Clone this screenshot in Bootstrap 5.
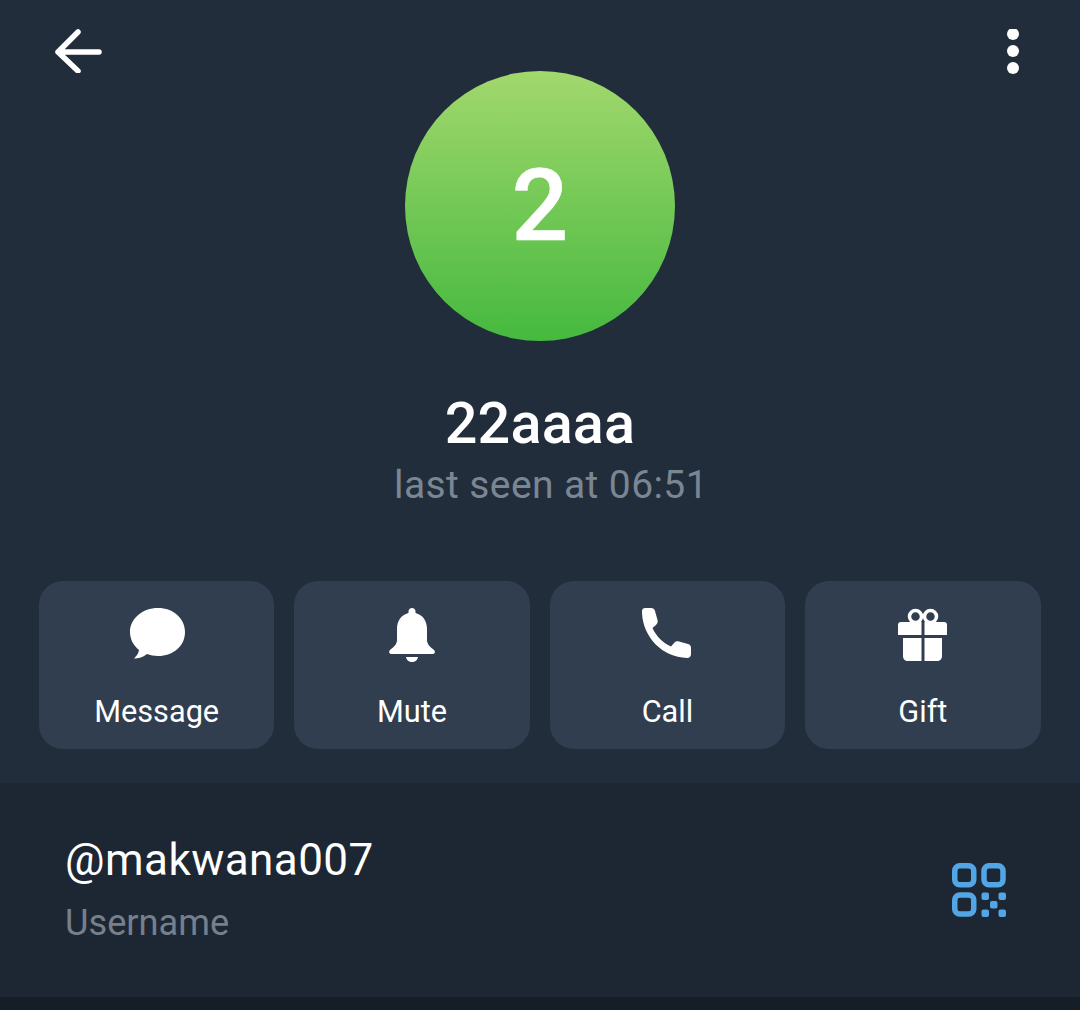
<!DOCTYPE html>
<html lang="en">
<head>
<meta charset="utf-8">
<title>Profile</title>
<link href="https://cdn.jsdelivr.net/npm/bootstrap@5.3.0/dist/css/bootstrap.min.css" rel="stylesheet">
<style>
html,body{height:100%}
body{background:#151e27;font-family:Roboto,"Liberation Sans",sans-serif;color:#fff;overflow:hidden}
.shell{height:783px;background:#212d3b}
.topbar{height:71px;padding:29px 59px 0 54px}
.topbar svg{display:block}
.avatar-disc{width:270px;height:270px;background:linear-gradient(180deg,#a2d86d 0%,#45b93f 100%);font-size:100px;font-weight:500;line-height:1;-webkit-text-stroke:.5px #fff}
.who{margin-top:49px;line-height:1}
.who-name{font-size:57.500px;font-weight:500;line-height:68px;letter-spacing:.2px}
.who-seen{font-size:39px;line-height:54px;color:#7b8693;letter-spacing:.4px;padding-left:22px}
.actions{margin-top:69px;padding:0 39.500px 0 39px;gap:20px}
.act{flex:1 1 0;height:168px;background:#303e50;border-radius:24px;padding-top:23px;color:#fff;font-size:30.700px;line-height:36px}
.act svg{display:block;height:60px;width:60px;margin-bottom:30px}
.info{height:214px;background:#1d2733;padding:0 74px 0 65px}
.info-main{font-size:44px;line-height:52px;letter-spacing:.45px}
.info-sub{font-size:36.200px;line-height:40px;color:#75808c;margin-top:17px}
.info-text{margin-top:-4px}
</style>
</head>
<body>
<div class="shell">
  <div class="topbar d-flex justify-content-between align-items-start">
    <svg width="48" height="44" viewBox="0 0 48 44" fill="none" stroke="#fff" stroke-width="5.500" stroke-linecap="round" stroke-linejoin="round"><path d="M4 23H45M24 3L4 23L24 42"/></svg>
    <svg width="16" height="50" viewBox="0 0 16 50" fill="#fff"><circle cx="8" cy="5" r="6"/><circle cx="8" cy="22" r="6"/><circle cx="8" cy="39" r="6"/></svg>
  </div>
  <div class="avatar-disc rounded-circle d-flex align-items-center justify-content-center mx-auto">2</div>
  <div class="who text-center">
    <div class="who-name">22aaaa</div>
    <div class="who-seen">last seen at 06:51</div>
  </div>
  <div class="actions d-flex">
    <div class="act d-flex flex-column align-items-center">
      <svg viewBox="0 0 60 60" fill="#fff"><path d="M31 4C15.500 4 3 14.500 3 28C3 35.500 6.500 41.500 12 46C11.500 49.500 9.500 52 7 54.500C11.500 54.500 16.500 53 20 50C23 51.300 27 52 31 52C46.500 52 58 42 58 28C58 14.500 46.500 4 31 4Z"/></svg>
      <span>Message</span>
    </div>
    <div class="act d-flex flex-column align-items-center">
      <svg viewBox="0 0 60 60" fill="#fff"><path d="M30 4C32 4 33.500 5.500 33.500 7.500V9C41 11 45 17 45 25V36C45 40 48 43 52 46C53.500 47.500 53 50 50.500 50H9.500C7 50 6.500 47.500 8 46C12 43 15 40 15 36V25C15 17 19 11 26.500 9V7.500C26.500 5.500 28 4 30 4Z"/><path d="M24 53H36C35.500 56 33 58 30 58C27 58 24.500 56 24 53Z"/></svg>
      <span>Mute</span>
    </div>
    <div class="act d-flex flex-column align-items-center">
      <svg viewBox="0 0 60 60" fill="#fff"><path d="M5 7C5 5 6.500 4 8 4H14C16 4 17.500 5 18 7L20.500 16C21 18 20.500 19.500 19 21L15.500 24C19 32 26 39 34 42.500L37.500 38.500C38.500 37.500 40.500 37 42 37.500L51 40C53 40.500 54 42 54 44V50C54 52.500 52.500 54 50 54C25 53 6 33 5 9Z"/></svg>
      <span>Call</span>
    </div>
    <div class="act d-flex flex-column align-items-center">
      <svg viewBox="0 0 60 60" fill="none"><circle cx="22.500" cy="12.500" r="6" stroke="#fff" stroke-width="3.500"/><circle cx="37.500" cy="12.500" r="6" stroke="#fff" stroke-width="3.500"/><path fill="#fff" d="M8 18H28.500V31H5V21C5 19 6 18 8 18ZM31.500 18H51C53 18 54 19 54 21V31H31.500ZM10 34H28.500V57H15C12 57 10 55 10 52ZM31.500 34H49V52C49 55 47 57 44 57H31.500Z"/></svg>
      <span>Gift</span>
    </div>
  </div>
</div>
<div class="info d-flex align-items-center justify-content-between">
  <div class="info-text">
    <div class="info-main">@makwana007</div>
    <div class="info-sub">Username</div>
  </div>
  <svg width="54" height="54" viewBox="0 0 54 54" fill="none" stroke="#53a6e6" stroke-width="5.500"><rect x="2.750" y="2.750" width="19" height="19" rx="5"/><rect x="32" y="2.750" width="19" height="19" rx="5"/><rect x="2.750" y="32" width="19" height="19" rx="5"/><g fill="#53a6e6" stroke="none"><rect x="29.500" y="29.500" width="7.500" height="7.500" rx="2"/><rect x="46.500" y="29.500" width="7.500" height="7.500" rx="2"/><rect x="38" y="38" width="7.500" height="7.500" rx="2"/><rect x="29.500" y="46.500" width="7.500" height="7.500" rx="2"/><rect x="46.500" y="46.500" width="7.500" height="7.500" rx="2"/></g></svg>
</div>
</body>
</html>
